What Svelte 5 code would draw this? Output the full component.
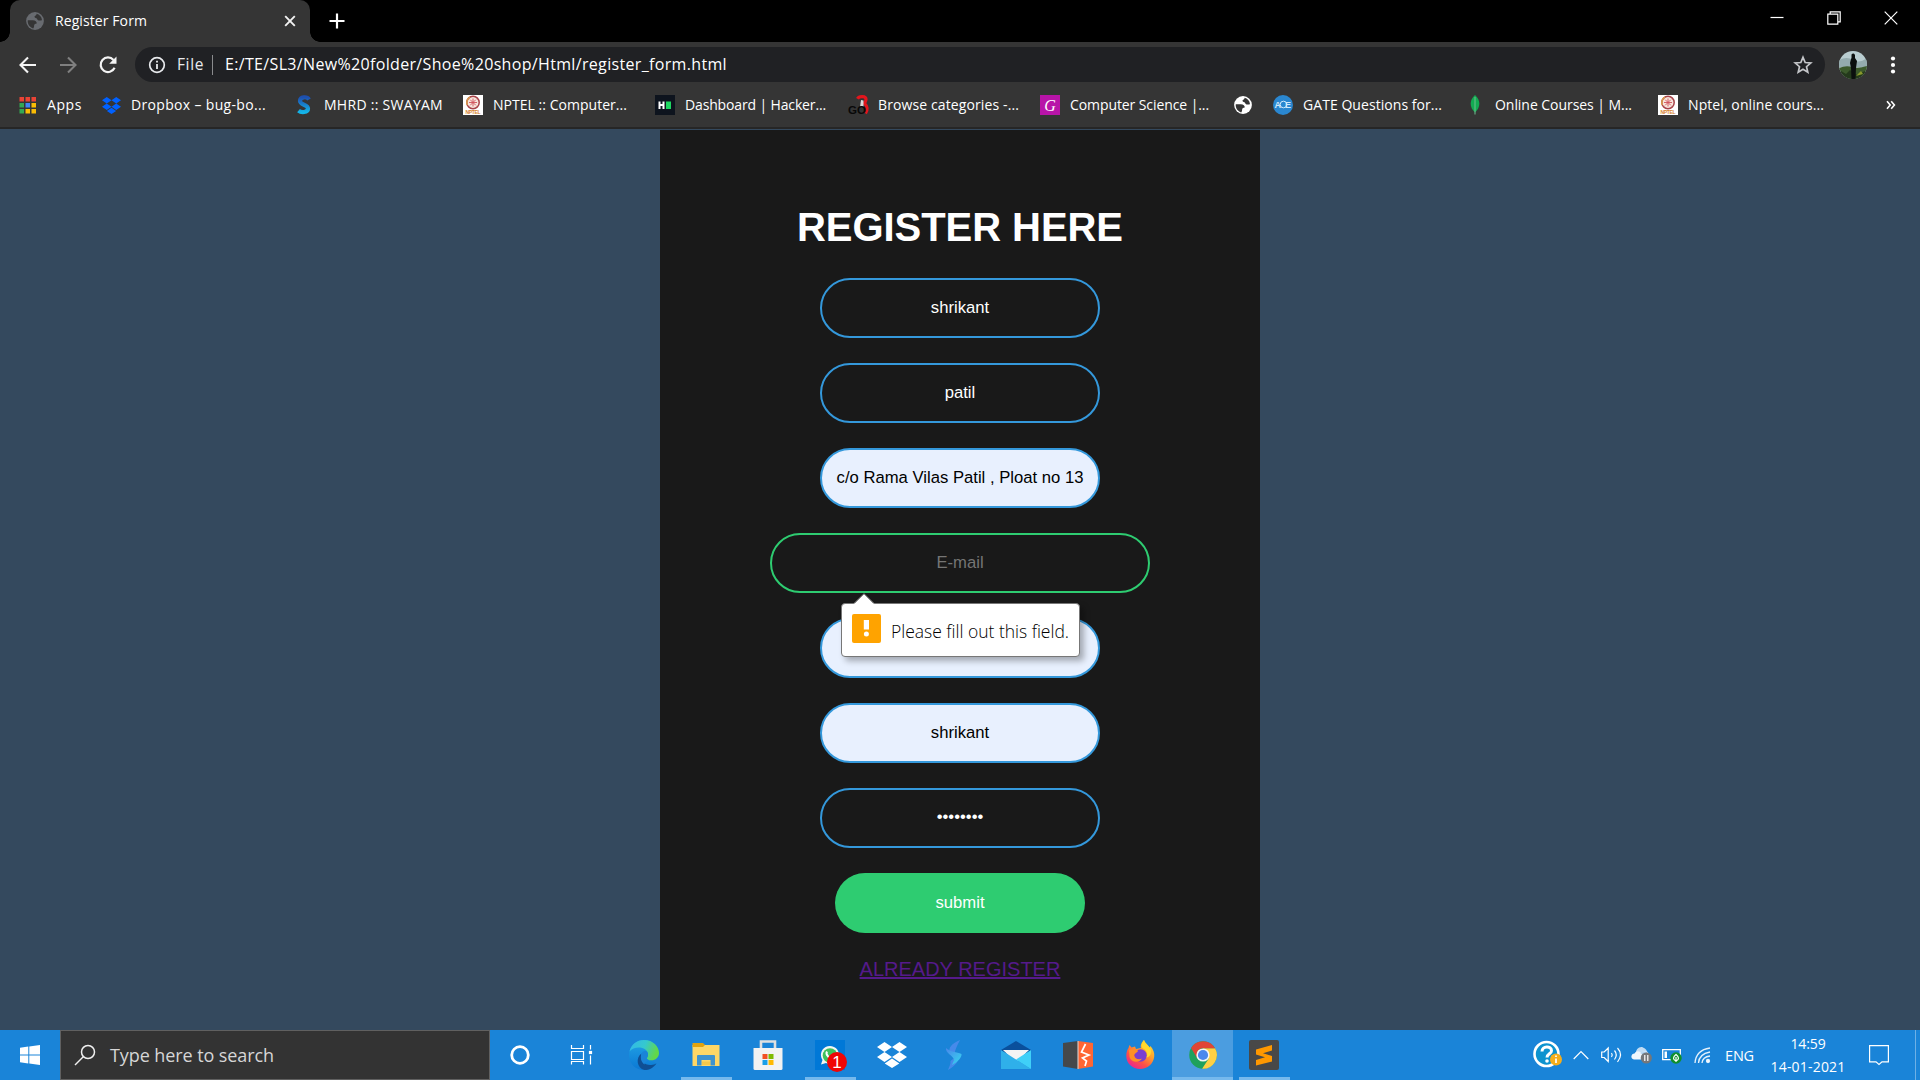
<script>
  const bookmarks = [
    { icon: 'apps', label: 'Apps', w: 35 },
    { icon: 'dropbox', label: 'Dropbox – bug-bo...', w: 135 },
    { icon: 'swayam', label: 'MHRD :: SWAYAM', w: 119 },
    { icon: 'nptel', label: 'NPTEL :: Computer...', w: 134 },
    { icon: 'hacker', label: 'Dashboard | Hacker...', w: 141 },
    { icon: 'go', label: 'Browse categories -...', w: 141 },
    { icon: 'g', label: 'Computer Science |...', w: 139 },
    { icon: 'globe', label: '', w: 0 },
    { icon: 'ace', label: 'GATE Questions for...', w: 139 },
    { icon: 'leaf', label: 'Online Courses | M...', w: 137 },
    { icon: 'nptel', label: 'Nptel, online cours...', w: 136 }
  ];

  const fields = [
    { text: 'shrikant', kind: '' },
    { text: 'patil', kind: '' },
    { text: 'c/o Rama Vilas Patil , Ploat no 13', kind: 'filled' },
    { text: 'E-mail', kind: 'focus', bubble: true },
    { text: '', kind: 'filled' },
    { text: 'shrikant', kind: 'filled' },
    { text: '••••••••', kind: 'password' }
  ];

  const tasks = [
    { icon: 'cortana' },
    { icon: 'taskview' },
    { icon: 'edge' },
    { icon: 'explorer', open: true },
    { icon: 'store' },
    { icon: 'whatsapp', open: true },
    { icon: 'dropbox' },
    { icon: 'bolt' },
    { icon: 'mail' },
    { icon: 'burp' },
    { icon: 'firefox' },
    { icon: 'chrome', open: true, active: true },
    { icon: 'sublime', open: true }
  ];

  const appColors = ['#ea4335', '#ea4335', '#ea4335', '#34a853', '#4285f4', '#fbbc04', '#34a853', '#fbbc04', '#fbbc04'];

  // Spread a label over a given width by adjusting its letter spacing.
  function fit(node, width) {
    const n = node.textContent.length;
    if (!n || !width) return;
    const natural = node.getBoundingClientRect().width;
    node.style.letterSpacing = `${(width - natural) / n}px`;
  }
</script>

{#snippet globe(color, bg)}
  <svg width="18" height="18" viewBox="0 0 18 18">
    <circle cx="9" cy="9" r="8.900" fill={color} />
    <path d="M1.800 8.200h5c2.600 0 4.200 1.300 3.900 3.300-1.200.5-2.400.4-2.500 1.600-.1 1.300-.2 2.600-1 3.300-3.200-.9-5.500-3.800-5.500-7.400z" fill={bg} />
    <path d="M10.500 1.800c.4 1.800-1.800 1.600-2 3-.1 1.300 2.200 1 2.600 2.200.3 1.200 1.400 2 4.900 1.200-.3-3.300-2.500-5.700-5.500-6.400z" fill={bg} />
  </svg>
{/snippet}

{#snippet dropbox(color)}
  <svg width="100%" height="100%" viewBox="0 0 30 26" preserveAspectRatio="none">
    <path fill={color} d="M7.500 0 15 5 7.500 10 0 5zM22.500 0 30 5l-7.500 5L15 5zM7.500 10 15 15l-7.500 5L0 15zM22.500 10 30 15l-7.500 5L15 15zM15 16.500l7.300 4.900L15 26l-7.300-4.600z" />
  </svg>
{/snippet}

{#snippet bookmarkIcon(name)}
  {#if name === 'apps'}
    <svg width="20" height="20" viewBox="0 0 20 20">
      {#each appColors as c, i}
        <rect x={2.500 + (i % 3) * 6} y={2 + Math.floor(i / 3) * 6} width="4.500" height="4.500" fill={c} />
      {/each}
    </svg>
  {:else if name === 'dropbox'}
    <span class="dbx">{@render dropbox('#0061ff')}</span>
  {:else if name === 'swayam'}
    <svg width="20" height="20" viewBox="0 0 20 20">
      <defs><linearGradient id="sw" x1="0" y1="0" x2="0" y2="1"><stop offset="0" stop-color="#1d4fae" /><stop offset="1" stop-color="#14b4e8" /></linearGradient></defs>
      <path d="M15 4.500C13 1.200 6 1.500 6 6c0 4 8 3.500 8 7.600 0 4.200-7 4.200-9.500 2" fill="none" stroke="url(#sw)" stroke-width="4.200" />
    </svg>
  {:else if name === 'nptel'}
    <svg width="20" height="20" viewBox="0 0 20 20">
      <rect width="20" height="20" fill="#fff" />
      <circle cx="10" cy="7.500" r="6.200" fill="#f7e4dc" stroke="#a8434a" stroke-width="1.500" />
      <path d="M10 3.500v8M6 7.500h8M7.200 4.700l5.600 5.600M12.800 4.700l-5.600 5.600" stroke="#d0525c" stroke-width=".9" />
      <path d="M4.300 10A6.200 6.200 0 0 1 7 2.100" fill="none" stroke="#d99a4a" stroke-width="1.500" />
      <text x="10" y="19" text-anchor="middle" textLength="15" class="tiny" fill="#d8842c">NPTEL</text>
    </svg>
  {:else if name === 'hacker'}
    <svg width="20" height="20" viewBox="0 0 20 20">
      <rect width="20" height="20" fill="#0e141e" />
      <path d="M3.500 6.500h2v2.500h2V6.500h2v7.500h-2v-3h-2v3h-2z" fill="#fff" />
      <rect x="11" y="6.500" width="5" height="7.500" fill="#1ed760" />
    </svg>
  {:else if name === 'go'}
    <svg width="20" height="20" viewBox="0 0 20 20">
      <path d="M9.500 3.800C11 .8 18 .8 18 4.300c0 2-1 3-1.500 4 2.500 2.500 3.500 6 1 10" fill="none" stroke="#e3151c" stroke-width="3.200" />
      <path d="M13 5l2.500.5V12H12z" fill="#d8d8d8" />
      <text x="0" y="19" textLength="18" lengthAdjust="spacingAndGlyphs" class="go" fill="#080808">GO</text>
    </svg>
  {:else if name === 'g'}
    <svg width="20" height="20" viewBox="0 0 20 20">
      <rect width="20" height="20" fill="#b814a8" />
      <text x="10" y="15.500" text-anchor="middle" class="serifg" fill="#fff">G</text>
    </svg>
  {:else if name === 'globe'}
    {@render globe('#fff', '#353535')}
  {:else if name === 'ace'}
    <svg width="20" height="20" viewBox="0 0 20 20">
      <circle cx="10" cy="10" r="10" fill="#2a87d0" />
      <circle cx="10.500" cy="9.500" r="3.300" fill="none" stroke="#cfe9fb" stroke-width="1" />
      <text x="1.500" y="13" class="ace" fill="#cfe9fb">A</text>
      <text x="12" y="13" class="ace" fill="#cfe9fb">E</text>
    </svg>
  {:else}
    <svg width="20" height="20" viewBox="0 0 20 20">
      <path d="M10 0c5.500 5 6 12 0 17.500C4 12 4.500 5 10 0z" fill="#13aa52" />
      <path d="M10 2v17.500" stroke="#6fbf8f" stroke-width="1" />
    </svg>
  {/if}
{/snippet}

{#snippet taskIcon(name)}
  {#if name === 'cortana'}
    <svg width="30" height="30" viewBox="0 0 30 30"><circle cx="15" cy="15" r="8.300" fill="none" stroke="#fff" stroke-width="2.800" /></svg>
  {:else if name === 'taskview'}
    <svg width="30" height="30" viewBox="0 0 30 30" fill="none" stroke="#fff" stroke-width="1.200">
      <path d="M4.500 5v3.500h12V5M4.500 11.500h12v8h-12zM4.500 24.500v-3h12v3M23.500 5v4.500M23.500 15.500v9" />
      <rect x="22.500" y="11.500" width="2" height="2" fill="#fff" />
    </svg>
  {:else if name === 'edge'}
    <svg width="30" height="30" viewBox="0 0 30 30">
      <defs>
        <linearGradient id="eg" x1="0" x2="1" y2=".3"><stop offset="0" stop-color="#32b7ea" /><stop offset=".55" stop-color="#35c8cf" /><stop offset="1" stop-color="#62d849" /></linearGradient>
        <linearGradient id="eb" x1="0" x2="0" y2="1"><stop offset="0" stop-color="#22a4e6" /><stop offset="1" stop-color="#0b78d4" /></linearGradient>
      </defs>
      <path d="M15 0a15 15 0 0 0-15 15c0 9 7 15 15 15 5 0 9.500-2 12.500-6.500L22 20l8-6C29 5 23 0 15 0z" fill="url(#eb)" />
      <path d="M.5 11.500C2.500 4 8 0 15 0c9 0 15 6.500 15 13 0 4.600-3.600 7.300-7.500 7.300-3.600 0-5.300-1.600-4.300-2.900C20 15 19 9 12.500 7.800 7.500 7 3 8.500.5 11.500z" fill="url(#eg)" />
      <path d="M12.500 13.500c-2.500 7 3.500 12 9.500 11.500 2.500-.2 4-.8 5.500-1.800C24.500 28 20 30 15.500 30 7.500 28 6.500 17.500 12.500 13.500z" fill="#0f4f94" />
      <path d="M12.500 13.500c1-2 3-3 5.500-2 1.500 2 1.300 4.500.2 5.900-.8 1.100.1 2 1.300 2.500-2 1.600-4.500 3-4 4.600-3.500-2.500-4.500-7-3-11z" fill="#1a84d8" />
    </svg>
  {:else if name === 'explorer'}
    <svg width="30" height="30" viewBox="0 0 30 30">
      <path d="M1.500 5h27v21h-27z" fill="#ffd766" />
      <path d="M1.500 3h10.500l2 2-2 2H1.500z" fill="#e2a30e" />
      <path d="M6 25.500v-9.500q0-1 1-1h16q1 0 1 1v9.500h-4.500V20h-9v5.500z" fill="#3f93cf" />
      <path d="M11 25v-3.500h8V25z" fill="#f5c84a" />
    </svg>
  {:else if name === 'store'}
    <svg width="30" height="30" viewBox="0 0 30 30">
      <path d="M8 10V1.500h14V10" fill="none" stroke="#e0e0e0" stroke-width="2.600" />
      <path d="M.5 8h29v20.500q0 1.500-1.500 1.500H2Q.5 30 .5 28.500z" fill="#f2f2f2" />
      <rect x="9.500" y="14" width="5" height="5" fill="#f25022" /><rect x="15.500" y="14" width="5" height="5" fill="#7fba00" />
      <rect x="9.500" y="20" width="5" height="5" fill="#1a9fe8" /><rect x="15.500" y="20" width="5" height="5" fill="#ffb900" />
    </svg>
  {:else if name === 'whatsapp'}
    <svg width="32" height="34" viewBox="0 0 32 34">
      <rect x="1" y="2" width="30" height="30" fill="#0078d7" />
      <path d="M7 26.500 8.500 22A9 9 0 1 1 12 25z" fill="#f2f7f2" />
      <circle cx="16" cy="17.500" r="7.300" fill="#3fc15c" />
      <path d="M13 13.500c-2 3 3 8 6 7" fill="none" stroke="#fff" stroke-width="2" />
      <circle cx="23" cy="24" r="10" fill="#f00505" />
      <text x="23" y="30" text-anchor="middle" class="badge" fill="#fff">1</text>
    </svg>
  {:else if name === 'dropbox'}
    <span class="dbx big">{@render dropbox('#fff')}</span>
  {:else if name === 'bolt'}
    <svg width="30" height="30" viewBox="0 0 30 30">
      <defs><linearGradient id="bo" x1="0" x2="1" y2="1"><stop offset="0" stop-color="#4a86ea" /><stop offset="1" stop-color="#35d8f0" /></linearGradient></defs>
      <path d="M21 0C12 4 9 8 11 13l5 3c-1-5 2-10 5-16zM9 30c1-3 3-6 2.500-9L19 15c2 6-3 11-10 15z" fill="#5a8df2" opacity=".7" />
      <path d="M7 8c-1 5 8 8 8 12l-2 5c6-3 10-8 9.500-11C18 12 11 12 7 8z" fill="url(#bo)" />
    </svg>
  {:else if name === 'mail'}
    <svg width="30" height="30" viewBox="0 0 30 30">
      <path d="M0 10 15 1l15 9v3H0z" fill="#0a4f9c" />
      <path d="M2 10h26L17 20.500h-4z" fill="#f4f4f4" />
      <path d="M0 10l30 19H0z" fill="#2fb0ea" />
      <path d="M30 10v19L15 19.500z" fill="#3fd0f8" />
    </svg>
  {:else if name === 'burp'}
    <svg width="30" height="30" viewBox="0 0 30 30">
      <path d="M0 3 15 1v28L0 26.500z" fill="#45484b" />
      <path d="M15 1l15 2v23.500L15 29z" fill="#ff6633" />
      <path d="M14.500 1h1v28h-1z" fill="#d9dcdf" />
      <path d="M22.500 4 18.500 12l7.500 3-6.500 3 4 3-1.500 5" fill="none" stroke="#fff" stroke-width="1.700" />
    </svg>
  {:else if name === 'firefox'}
    <svg width="30" height="30" viewBox="0 0 30 30">
      <defs><linearGradient id="ff" x1=".9" x2=".2" y2="1"><stop offset="0" stop-color="#ffe43a" /><stop offset=".4" stop-color="#ffa02b" /><stop offset=".7" stop-color="#ff4f47" /><stop offset="1" stop-color="#e5219b" /></linearGradient></defs>
      <path d="M19 0c1 3.500 4 4.500 5.500 8l1-2c3 4 4.200 7 3.700 10.500C28.500 24 22.500 29 15 29 7.500 29 1.300 23.500 1.300 16c0-4 1.200-6.500 2.200-8l1-3 2 2.500 3.500-1L11 9l5-1c-1-3 1-6 3-8z" fill="url(#ff)" />
      <circle cx="15.500" cy="15.500" r="6.200" fill="#7a3fd0" />
      <path d="M4 10c3-1.500 5-.5 9 .5.500 1.500-3 2.500-4 4.500.5 4 5 5 8 3.500-3 5-11 4-12.500-1.500z" fill="#ff9126" />
      <path d="M19 0c-3.500 5-3 7.500 0 9 3 2 4 5 2.500 8.500 3.500-.5 5-4 4.500-7.500C25 6 20 4 19 0z" fill="#ffd92e" />
    </svg>
  {:else if name === 'chrome'}
    <svg width="30" height="30" viewBox="0 0 30 30">
      <circle cx="15" cy="15" r="13.800" fill="#1fa15d" />
      <path d="M15 8.300h12.100A13.800 13.800 0 0 1 14.100 28.800l6.700-10.400z" fill="#ffd045" />
      <path d="M3.100 8A13.800 13.800 0 0 1 27.100 8.300H15a6.700 6.700 0 0 0-6 4.500l.2 5.500z" fill="#e04535" />
      <circle cx="15" cy="15" r="6.600" fill="#f4f6f4" /><circle cx="15" cy="15" r="5.100" fill="#4a88ee" />
    </svg>
  {:else}
    <svg width="30" height="30" viewBox="0 0 30 30">
      <rect width="30" height="30" rx="2" fill="#484848" />
      <path d="M23 5v5.500l-9 2.800 9 2.700v5.500L7 25.500V20l9-2.800-9-2.700V9.500z" fill="#ff9800" />
    </svg>
  {/if}
{/snippet}

<div class="screen">
  <header>
    <div class="tabs">
      <div class="tab">
        <span class="fav">{@render globe('#686b70', '#353535')}</span>
        <span class="title"><span use:fit={92}>Register Form</span></span>
        <svg width="12" height="12" viewBox="0 0 12 12"><path d="M1.200 1.200l9.600 9.600M10.800 1.200l-9.600 9.600" stroke="#f2f2f2" stroke-width="1.900" /></svg>
      </div>
      <svg class="plus" width="16" height="16" viewBox="0 0 16 16"><path d="M8 .5v15M.5 8h15" stroke="#fff" stroke-width="2.200" /></svg>
      <div class="window">
        <svg width="14" height="14" viewBox="0 0 14 14"><path d="M.5 6.500h13" stroke="#fff" stroke-width="1.200" /></svg>
        <svg width="14" height="14" viewBox="0 0 14 14" fill="none" stroke="#fff" stroke-width="1.200"><path d="M.8 3.200h10v10h-10zM3.200 3V.8h10v10h-2.200" /></svg>
        <svg width="14" height="14" viewBox="0 0 14 14"><path d="M.7.7l12.600 12.600M13.300.7.7 13.300" stroke="#fff" stroke-width="1.200" /></svg>
      </div>
    </div>

    <div class="toolbar">
      <svg class="nav" width="20" height="20" viewBox="0 0 20 20" fill="none" stroke="#f4f4f4" stroke-width="2.100"><path d="M18 10H3M10 2.500 2.500 10l7.500 7.500" /></svg>
      <svg class="nav" width="20" height="20" viewBox="0 0 20 20" fill="none" stroke="#808080" stroke-width="2.100"><path d="M2 10h15M10 2.500l7.500 7.500-7.500 7.500" /></svg>
      <svg class="nav" width="20" height="20" viewBox="0 0 20 20"><path d="M16.600 12.800A7.300 7.300 0 1 1 15.500 5" fill="none" stroke="#f4f4f4" stroke-width="2.200" /><path d="M18.500 1.500v7.300h-7.300z" fill="#f4f4f4" /></svg>
      <div class="omnibox">
        <svg width="18" height="18" viewBox="0 0 18 18"><circle cx="9" cy="9" r="7.300" fill="none" stroke="#e8eaed" stroke-width="1.700" /><path d="M9 8v5M9 4.700v1.900" stroke="#e8eaed" stroke-width="1.800" /></svg>
        <span class="file"><span use:fit={27}>File</span></span>
        <i></i>
        <span class="url"><span use:fit={502}>E:/TE/SL3/New%20folder/Shoe%20shop/Html/register_form.html</span></span>
        <svg class="star" width="20" height="20" viewBox="0 0 20 20"><path d="M10 2.300l2.200 5.200 5.600.5-4.300 3.700 1.300 5.500L10 14.300l-4.800 2.900 1.300-5.500L2.200 8l5.600-.5z" fill="none" stroke="#c4c6c9" stroke-width="1.700" /></svg>
      </div>
      <svg class="avatar" width="28" height="28" viewBox="0 0 28 28">
        <defs><clipPath id="av"><circle cx="14" cy="14" r="14" /></clipPath></defs>
        <g clip-path="url(#av)">
          <rect width="28" height="28" fill="#b9cdd0" />
          <path d="M0 9q8-4 14 0t14-2v9H0z" fill="#94abae" />
          <path d="M0 17q7-3 13-1t15-1v13H0z" fill="#3c5a2c" />
          <path d="M2 20l5 3 4-4 7 5 8-4v8H2z" fill="#243a1c" />
          <path d="M17 25l5-5 2 3z" fill="#8a9a2c" />
          <path d="M12.500 3.500q2-2 3.500.5v3l2 3-1 7-.5 11h-4l-.5-11-1-5 1-4 .5-1z" fill="#0b0f0e" />
        </g>
      </svg>
      <svg class="dots" width="6" height="20" viewBox="0 0 6 20" fill="#fff"><circle cx="3" cy="3.500" r="2.100" /><circle cx="3" cy="10" r="2.100" /><circle cx="3" cy="16.500" r="2.100" /></svg>
    </div>

    <div class="bookmarks">
      {#each bookmarks as b}
        <div class="bookmark">
          <span class="bicon">{@render bookmarkIcon(b.icon)}</span>
          <span class="blabel"><span use:fit={b.w}>{b.label}</span></span>
        </div>
      {/each}
      <svg class="more" width="10" height="10" viewBox="0 0 10 10" fill="none" stroke="#fff" stroke-width="1.600"><path d="M1 1.200 4.200 5 1 8.800M5.200 1.200 8.400 5 5.200 8.800" /></svg>
    </div>
  </header>

  <main>
    <form class="card">
      <h1><span use:fit={326}>REGISTER HERE</span></h1>
      {#each fields as f}
        <div class="field {f.kind}">
          <span>{f.text}</span>
          {#if f.bubble}
            <div class="bubble">
              <svg class="tip" width="22" height="12" viewBox="0 0 22 12"><path d="M0 12 11 1l11 11z" fill="#fff" /><path d="M0 11 11 .5 22 11" fill="none" stroke="#888" stroke-width=".6" /></svg>
              <svg width="29" height="29" viewBox="0 0 29 29"><rect width="29" height="29" rx="2" fill="#ffa300" /><path d="M11.800 6h5.200v9.500h-5.200z" fill="#fff" /><circle cx="14.400" cy="20" r="2.500" fill="#fff" /></svg>
              <span class="msg"><span use:fit={178}>Please fill out this field.</span></span>
            </div>
          {/if}
        </div>
      {/each}
      <div class="submit">submit</div>
      <a href="#login">ALREADY REGISTER</a>
    </form>
  </main>

  <footer>
    <div class="start">
      <svg width="20" height="20" viewBox="0 0 20 20" fill="#fff"><path d="M0 2.800 8.300 1.600v7.900H0zM9.300 1.400 20 0v9.500H9.300zM0 10.500h8.300v7.900L0 17.200zM9.300 10.500H20V20L9.300 18.600z" /></svg>
    </div>
    <div class="search">
      <svg width="22" height="22" viewBox="0 0 22 22" fill="none" stroke="#f0f0f0" stroke-width="1.500"><circle cx="14" cy="8" r="6.500" /><path d="M9.500 12.500 1 21" /></svg>
      <span><span use:fit={164}>Type here to search</span></span>
    </div>
    <div class="tasks">
      {#each tasks as t}
        <div class="task" class:open={t.open} class:active={t.active}>{@render taskIcon(t.icon)}</div>
      {/each}
    </div>
    <div class="tray">
      <svg width="30" height="30" viewBox="0 0 30 30">
        <circle cx="13.500" cy="14" r="12" fill="#0e93cf" stroke="#fff" stroke-width="2.600" />
        <path d="M9 11.500c0-6 9.500-6 9.500-.8 0 3.300-4.500 3-4.500 6.800" fill="none" stroke="#fff" stroke-width="3" /><circle cx="14" cy="21" r="1.800" fill="#fff" />
        <circle cx="23" cy="19.500" r="6" fill="#f6ae1c" /><path d="M23 18.500v4.500M23 15.500v1.600" stroke="#fff" stroke-width="1.700" />
      </svg>
      <svg class="chev" width="16" height="10" viewBox="0 0 16 10"><path d="M.7 9 8 1.500 15.300 9" fill="none" stroke="#fff" stroke-width="1.200" /></svg>
      <svg class="vol" width="21" height="20" viewBox="0 0 21 20" fill="none" stroke="#fff" stroke-width="1.200"><path d="M.7 7h2.500l4-4v13.500l-4-4H.7zM10.500 8q1.500 2 0 4M13.500 5.500q3.500 4.300 0 9M16.500 3q6 6.500 0 14" /></svg>
      <svg class="cloud" width="21" height="18" viewBox="0 0 21 18"><path d="M5 9C4 3 9 0 12 1.500c3 1 4 3 4 5z" fill="#c2dcf3" /><path d="M3 13.500c-4-1-3-6 .5-6C5.500 4 9 5 10 7l5-2c4 1 3 8 0 8.500z" fill="#eef6fd" /><path d="M9 7l6-1.500c3 .5 3 4 2 5z" fill="#a8cdee" /><circle cx="15.300" cy="12" r="5.600" fill="#75777a" /><path d="M13.800 9v6M16.800 9v6" stroke="#fff" stroke-width="1.200" /></svg>
      <svg class="bat" width="20" height="17" viewBox="0 0 20 17"><path d="M.7 2.700h17.600v10H.7z" fill="none" stroke="#fff" stroke-width="1.300" /><path d="M2.500 4.500h2.500v6.500H2.500z" fill="#fff" /><circle cx="14" cy="11" r="5.700" fill="#0f8f2c" /><path d="M14 7.500q5 4 0 6.500-5-2.500 0-6.500zM14 10v5" fill="none" stroke="#fff" stroke-width="1.200" /></svg>
      <svg class="wifi" width="17" height="17" viewBox="0 0 17 17" fill="none" stroke="#e4f1fc" stroke-width="1.300"><path d="M1 16Q2 3 16 1M4.500 16Q5 7 16 5M8 16q.5-6 8-7" /><circle cx="14" cy="14" r="1.500" fill="#fff" /></svg>
      <span class="lang"><span use:fit={29}>ENG</span></span>
      <div class="clock"><span use:fit={35}>14:59</span><span use:fit={75}>14-01-2021</span></div>
      <svg class="note" width="20" height="20" viewBox="0 0 20 20"><path d="M.6.600h18.800v16.200h-6.400L10 19.400 7 16.800H.6z" fill="none" stroke="#fff" stroke-width="1.200" /></svg>
      <i class="desk"></i>
    </div>
  </footer>
</div>

<style>
  :global(body) { margin: 0; overflow: hidden; }
  .screen { width: 1920px; height: 1080px; display: flex; flex-direction: column; font-family: 'Open Sans', 'Noto Sans', sans-serif; color: #fff; background: #34495e; }
  .screen * { box-sizing: border-box; }
  svg { display: block; flex: none; overflow: visible; }
  span { white-space: nowrap; }
  header { height: 129px; background: #353535; border-bottom: 2px solid #262626; }

  .tabs { height: 42px; background: #000; display: flex; align-items: center; padding-left: 10px; }
  .tab { position: relative; width: 300px; height: 42px; background: #353535; border-radius: 10px 10px 0 0; display: flex; align-items: center; padding: 0 14px 0 16px; font-size: 14px; }
  .tab::before, .tab::after { content: ''; position: absolute; bottom: 0; width: 10px; height: 10px; }
  .tab::before { left: -10px; background: radial-gradient(circle at 0 0, transparent 9.500px, #353535 10px); }
  .tab::after { right: -10px; background: radial-gradient(circle at 100% 0, transparent 9.500px, #353535 10px); }
  .fav { width: 29px; }
  .title { flex: 1; padding-bottom: 2px; }
  .plus { margin-left: 19px; }
  .window { margin-left: auto; display: flex; gap: 43px; padding: 0 22px 6px 0; }

  .toolbar { height: 45px; display: flex; align-items: center; padding-left: 18px; }
  .nav { margin-right: 20px; }
  .omnibox { width: 1690px; height: 35px; margin-left: -3px; border-radius: 18px; background: #202124; display: flex; align-items: center; padding-left: 13px; font-size: 16px; }
  .file { width: 35px; margin-left: 11px; font-size: 15.500px; color: #e8eaed; padding-bottom: 1px; }
  .omnibox i { width: 1px; height: 20px; background: #8a8b8d; margin-right: 12px; }
  .url { flex: 1; padding-bottom: 1px; }
  .star { margin-right: 12px; }
  .avatar { margin-left: 14px; }
  .dots { margin-left: 23px; }

  .bookmarks { height: 36px; display: grid; grid-template-columns: 84px 193px 169px 192px 193px 192px 193px 40px 192px 193px 228px 10px; align-items: center; padding-left: 17px; font-size: 14px; }
  .bookmark { display: flex; align-items: center; gap: 10px; }
  .bicon { width: 20px; display: flex; justify-content: center; }
  .blabel { padding-bottom: 2px; }
  .dbx { width: 19px; height: 17px; }
  .dbx.big { width: 30px; height: 26px; }
  .tiny { font: bold 5px 'Liberation Sans', sans-serif; }
  .go { font: bold 11px 'Liberation Sans', sans-serif; }
  .serifg { font: italic 16px 'Liberation Serif', serif; }
  .ace { font: bold 9px 'Liberation Sans', sans-serif; }
  .badge { font: 17px 'Liberation Sans', sans-serif; }

  main { height: 901px; padding-top: 1px; display: flex; justify-content: center; }
  .card { width: 600px; background: #191919; display: flex; flex-direction: column; align-items: center; font-family: 'Liberation Sans', Arial, sans-serif; }
  h1 { margin: 73px 0 0; height: 75px; font-size: 40px; line-height: 48px; font-weight: 700; }
  .field { position: relative; width: 280px; height: 60px; margin-bottom: 25px; flex: none; border: 2px solid #3498db; border-radius: 30px; display: flex; align-items: center; justify-content: center; font-size: 16.670px; }
  .filled { background: #e8f0fe; color: #000; }
  .focus { width: 380px; border-color: #2ecc71; z-index: 1; color: #757575; }
  .password { padding-bottom: 2px; }
  .submit { width: 250px; height: 60px; border-radius: 30px; background: #2ecc71; display: flex; align-items: center; justify-content: center; font-size: 16.670px; flex: none; }
  a { margin-top: 25px; font-size: 20px; line-height: 23px; color: #551a8b; }
  .bubble { position: absolute; left: 69px; top: 68px; width: 239px; height: 54px; background: #fff; border: 1px solid #777; border-radius: 4px; box-shadow: 4px 4px 6px rgba(0, 0, 0, .3); display: flex; align-items: flex-start; padding: 10px; color: #000; font: 300 17.500px 'Open Sans', sans-serif; }
  .tip { position: absolute; left: 11px; top: -11px; }
  .msg { margin-left: 10px; line-height: 34px; }

  footer { height: 50px; background: #1a84d8; display: flex; align-items: center; }
  .start { width: 60px; display: flex; justify-content: center; }
  .search { width: 430px; height: 50px; background: #333; border: 1px solid #606060; display: flex; align-items: center; padding-left: 13px; gap: 14px; color: #d6d6d6; font-size: 18px; }
  .tasks { display: flex; height: 50px; margin-left: -1px; }
  .task { width: 62px; height: 50px; display: flex; align-items: center; justify-content: center; position: relative; }
  .task:first-child { z-index: 0; }
  .open::after { content: ''; position: absolute; left: 6px; right: 5px; bottom: 0; height: 3px; background: #76b9ed; }
  .active { background: #4b9de0 padding-box; border-left: 1px solid transparent; }
  .active::after { left: 0; right: 0; }
  .tray { flex: 1; height: 50px; display: flex; align-items: center; padding-left: 238px; }
  .chev { margin-left: 10px; }
  .vol { margin-left: 12px; }
  .cloud { margin-left: 9px; }
  .bat { margin-left: 10px; }
  .wifi { margin-left: 12px; }
  .lang { width: 29px; margin-left: 14px; font-size: 14.500px; }
  .clock { width: 74px; margin-left: 17px; display: flex; flex-direction: column; align-items: center; font-size: 14px; line-height: 23px; }
  .note { margin-left: 24px; }
  .desk { width: 1px; height: 50px; margin-left: 26px; background: #6db0e6; }
</style>
